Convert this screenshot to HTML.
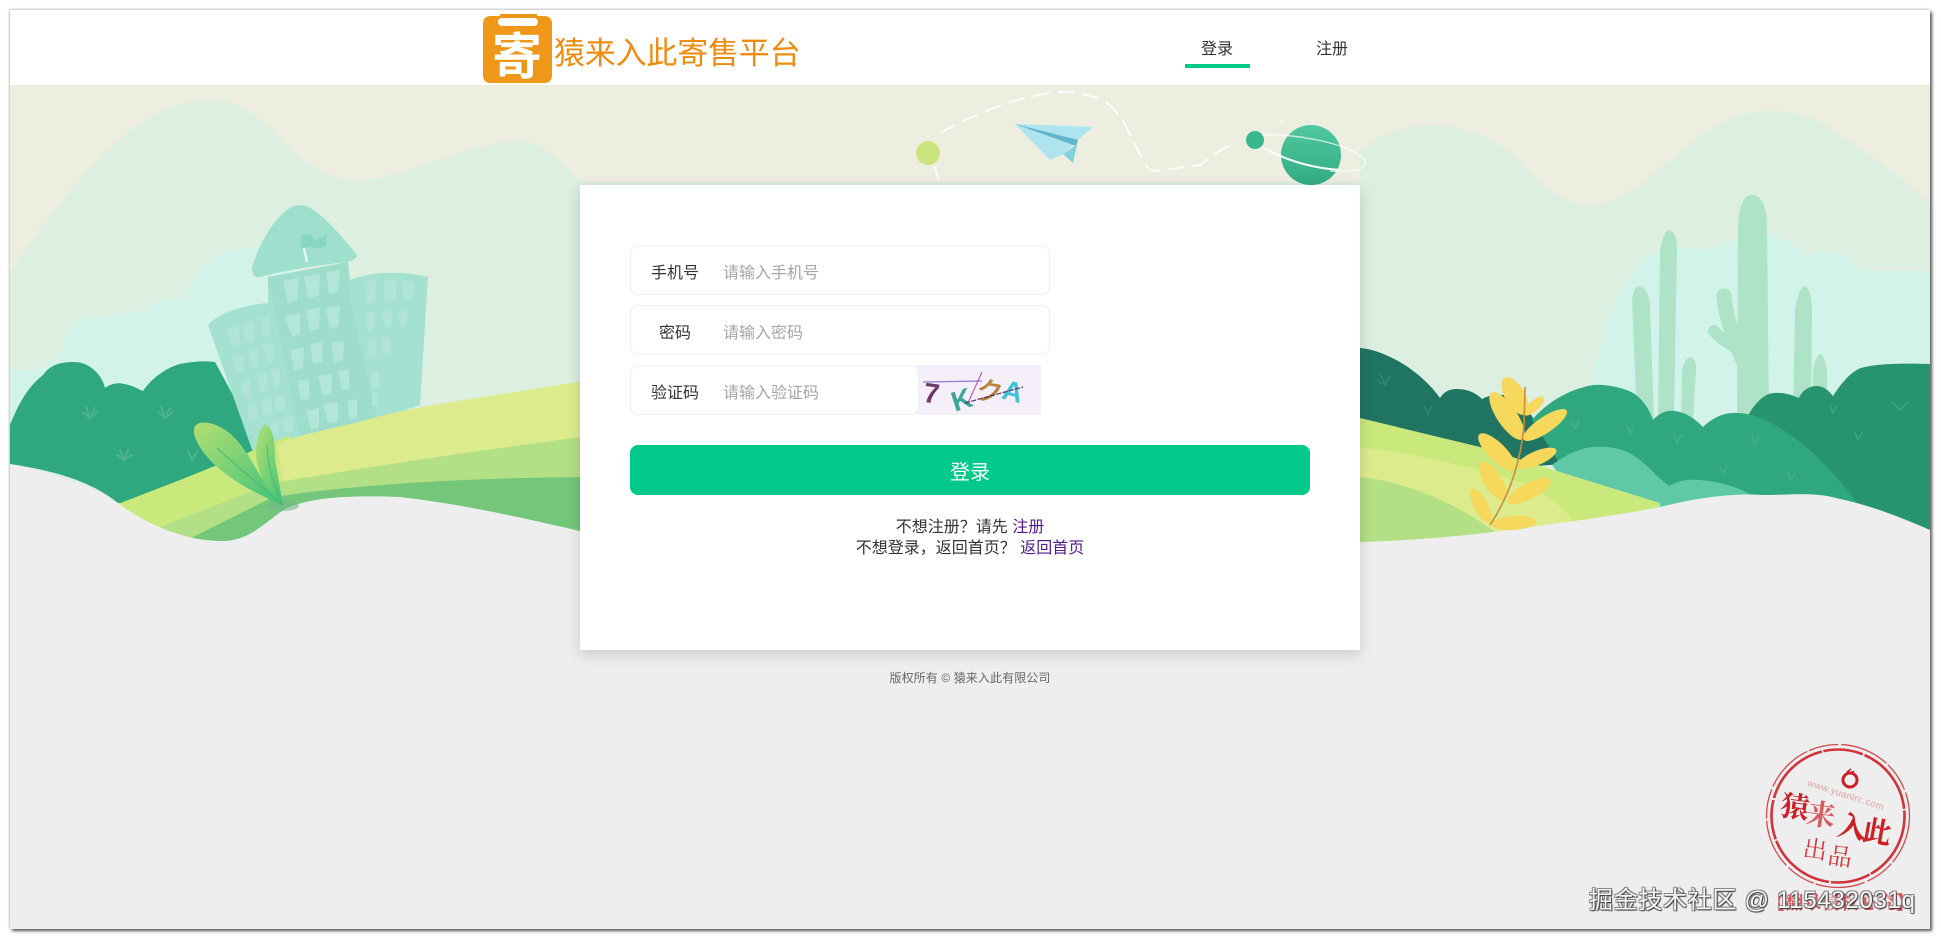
<!DOCTYPE html>
<html lang="zh"><head><meta charset="utf-8"><title>猿来入此寄售平台</title>
<style>
*{box-sizing:border-box;margin:0;padding:0}
html,body{width:1941px;height:940px;overflow:hidden;background:#fff;font-family:"Liberation Sans","Noto Sans CJK SC",sans-serif}
#frame{position:absolute;left:10px;top:10px;width:1920px;height:919px;background:#eee;box-shadow:2px 2px 3px #555,-1px -1px 2px #ccc}
svg{position:absolute;left:0;top:0}
.abs{position:absolute;white-space:nowrap}
#card{position:absolute;left:580px;top:185px;width:780px;height:465px;background:#fff;box-shadow:0 4px 14px rgba(0,0,0,.16)}
.field{position:absolute;background:#fff;border:1px solid #eef0f0;border-radius:9px;left:630px;width:420px;height:50px}
.lab{position:absolute;left:630px;width:90px;text-align:center;font-size:16px;color:#333;height:50px;line-height:50px}
.ph{position:absolute;left:723px;font-size:16px;color:#a5a5a5;height:50px;line-height:50px}
a{color:#551a8b;text-decoration:none}
</style></head><body>
<div id="frame"></div>

<svg width="1941" height="940" viewBox="0 0 1941 940">
<defs>
<clipPath id="fr"><rect x="10" y="10" width="1920" height="919"/></clipPath>
<linearGradient id="pl" x1="0" y1="0" x2="0" y2="1"><stop offset="0" stop-color="#4fc8a0"/><stop offset="1" stop-color="#33ab83"/></linearGradient>
<linearGradient id="lf" x1="0" y1="0" x2="1" y2="1"><stop offset="0" stop-color="#b2df72"/><stop offset="1" stop-color="#3fc17a"/></linearGradient>
</defs>
<g clip-path="url(#fr)">
<rect x="10" y="85" width="1920" height="500" fill="#eeeee0"/>
<!-- mountains -->
<path fill="#dcefe0" d="M10,271 C60,200 130,100 210,100 C250,100 270,130 297,154 C320,175 340,180 359,180 C400,180 470,141 520,141 C545,141 570,170 580,182 L1360,182 L1360,150 C1385,130 1410,125 1434,125 C1470,125 1500,145 1514,154 C1540,185 1560,204 1589,204 C1620,204 1640,185 1669,161 C1700,135 1730,111 1768,111 C1800,111 1820,120 1836,132 C1870,155 1900,175 1930,204 L1930,520 L10,520 Z"/>
<!-- clouds -->
<path fill="#d2f3e9" d="M10,371 L40,371 C50,360 55,357 62,357 C62,335 75,318 92,318 C115,316 130,310 142,311 C155,300 170,298 186,300 C190,270 215,248 250,248 L300,250 L300,450 L10,450Z"/>
<path fill="#d2f3e9" d="M1589,400 C1600,340 1610,310 1626,282 C1640,260 1655,250 1669,250 C1690,245 1700,250 1712,250 C1730,240 1750,236 1768,236 C1785,236 1800,250 1805,257 C1820,250 1840,250 1848,257 L1861,271 L1930,271 L1930,440 L1589,440 Z"/>
<!-- cactus -->
<g fill="#afe3c8">
<path d="M1737,420 L1738,225 Q1740,195 1752,195 Q1766,195 1767,225 L1769,420Z"/>
<path d="M1658,420 L1660,250 Q1664,230 1669,230 Q1677,232 1677,250 L1674,420Z"/>
<path d="M1637,420 L1632,300 Q1634,286 1640,286 Q1648,288 1650,305 L1654,420Z"/>
<path d="M1681,420 L1682,370 Q1686,357 1690,357 Q1697,358 1696,370 L1693,420Z"/>
<path d="M1793,420 L1795,310 Q1799,286 1805,286 Q1812,290 1812,310 L1811,420Z"/>
<path d="M1812,420 L1813,370 Q1816,354 1821,354 Q1826,358 1827,372 L1827,420Z"/>
</g>
<g fill="none" stroke="#afe3c8" stroke-linecap="round">
<path stroke-width="15" d="M1750,375 C1735,345 1726,320 1724,296"/>
<path stroke-width="12" d="M1745,352 C1730,345 1720,338 1714,331"/>
</g>
<!-- left bush -->
<path fill="#2fa87f" d="M10,425 C20,400 30,385 43,375 C50,365 60,362 74,362 C90,362 102,375 105,388 C110,384 118,382 124,384 C132,385 140,390 143,391 C150,380 165,368 180,364 C195,361 205,361 215,362 L290,500 L118,503 C90,480 50,470 10,464 Z"/>
<g fill="none" stroke="#4cb58f" stroke-width="2" stroke-linecap="round">
<path d="M86,407 L90,418 L95,408 M90,418 L83,412 M90,418 L98,412"/>
<path d="M161,407 L165,418 L170,408 M165,418 L158,412 M165,418 L173,412"/>
<path d="M120,450 L124,460 L128,450 M124,460 L117,455 M124,460 L132,455"/>
<path d="M188,450 L192,460 L197,452"/>
</g>
<!-- buildings -->
<path fill="#a5e1d0" d="M208,325 C220,312 245,305 268,303 L268,277 L348,262 L350,280 C370,272 400,270 428,277 L420,405 L377,420 L300,445 L255,458 Z"/>
<path fill="#9edccb" d="M268,277 L348,262 L350,300 L377,418 L300,438 Z"/>
<path fill="#9fdfcd" d="M300,205 C310,205 325,215 357,255 Q356,260 347,262 C320,265 285,270 260,277 Q252,278 252,268 C258,245 280,205 300,205 Z"/>
<g fill="#b1e6d8">
<path d="M283,281 L299,278 L297,300 L288,303Z"/><path d="M304,276 L320,274 L319,296 L308,298Z"/><path d="M326,272 L340,270 L338,292 L329,294Z"/>
<path d="M285,316 L300,313 L300,334 L292,337Z"/><path d="M306,310 L320,308 L319,329 L310,331Z"/><path d="M326,308 L340,306 L338,327 L330,329Z"/>
<path d="M290,350 L304,348 L303,368 L294,370Z"/><path d="M310,344 L323,342 L322,362 L313,364Z"/><path d="M331,343 L344,341 L343,360 L334,362Z"/>
<path d="M297,381 L309,379 L309,399 L301,400Z"/><path d="M318,376 L332,374 L331,394 L322,395Z"/><path d="M338,371 L349,369 L349,389 L342,390Z"/>
<path d="M306,411 L319,408 L319,428 L311,430Z"/><path d="M323,404 L338,402 L338,422 L328,423Z"/><path d="M347,401 L357,399 L357,418 L350,420Z"/>
</g>
<g fill="#afe4d6">
<path d="M226,329 L239,325 L240,345 L233,347Z"/><path d="M242,324 L254,321 L254,341 L247,342Z"/><path d="M260,318 L270,316 L270,336 L264,337Z"/>
<path d="M232,357 L243,354 L244,373 L237,374Z"/><path d="M248,350 L258,348 L258,367 L252,368Z"/><path d="M264,345 L273,343 L273,362 L267,363Z"/>
<path d="M240,382 L250,379 L251,398 L245,399Z"/><path d="M257,374 L267,372 L267,391 L261,392Z"/><path d="M271,370 L280,368 L280,387 L274,388Z"/>
<rect x="248" y="404" width="10" height="16" rx="3"/><rect x="262" y="399" width="10" height="16" rx="3"/><rect x="275" y="394" width="10" height="16" rx="3"/>
<rect x="271" y="420" width="8" height="15" rx="3"/><rect x="284" y="417" width="9" height="15" rx="3"/>
<path d="M364,282 L376,280 L375,302 L368,304Z"/><rect x="384" y="280" width="12" height="20" rx="3"/><rect x="403" y="281" width="11" height="19" rx="3"/>
<path d="M365,313 L375,312 L374,331 L368,332Z"/><path d="M382,311 L392,310 L391,327 L385,328Z"/><path d="M398,311 L408,310 L406,325 L401,326Z"/>
<rect x="367" y="339" width="9" height="19" rx="3"/><rect x="382" y="337" width="9" height="17" rx="3"/>
<rect x="371" y="370" width="8" height="18" rx="3"/><rect x="372" y="392" width="6" height="14" rx="2"/>
</g>
<path fill="#86d6c1" d="M300,236 Q312,232 314,240 Q322,238 327,235 L326,246 Q316,250 310,246 Q304,248 302,249 Z"/>
<path stroke="#e4f6f0" stroke-width="2.5" d="M304,248 L307,262"/>
<!-- right back bushes -->
<path fill="#26946f" d="M1746,420 C1750,410 1762,393 1774,393 C1786,392 1794,396 1799,398 C1802,390 1810,386 1817,386 C1824,386 1830,392 1833,396 C1840,385 1850,372 1861,368 C1875,364 1900,363 1930,364 L1930,540 L1800,540 Z"/>
<path fill="#1f7561" d="M1360,348 C1385,350 1420,370 1440,398 C1445,390 1452,389 1457,389 C1470,389 1478,395 1482,399 C1490,395 1497,394 1503,395 C1515,398 1525,405 1530,413 L1562,464 L1360,480Z"/>
<path fill="#2fa87f" d="M1532,420 C1545,405 1565,390 1593,385 C1612,384 1628,390 1633,393 C1642,398 1650,410 1653,420 C1660,412 1668,410 1675,411 C1688,413 1696,420 1703,427 C1712,418 1725,412 1737,413 C1770,413 1820,450 1862,510 L1600,540 L1560,464 Z"/>
<path fill="#5fc9a7" d="M1552,465 C1565,455 1580,448 1593,447 C1610,446 1625,448 1640,460 C1650,468 1658,478 1669,486 C1680,480 1690,479 1700,480 C1725,482 1745,490 1760,500 L1600,530 Z"/>
<g fill="none" stroke-width="1.5" stroke-linecap="round">
<g stroke="#2f8a72"><path d="M1381,375 L1385,385 L1390,376 M1385,385 L1378,381"/><path d="M1424,405 L1428,414 L1432,406"/></g>
<g stroke="#43b08c"><path d="M1572,420 L1575,428 L1579,421 M1575,428 L1570,424"/><path d="M1627,425 L1630,433 L1634,426"/><path d="M1674,435 L1677,443 L1681,435"/><path d="M1752,436 L1755,444 L1759,437"/><path d="M1720,466 L1723,473 L1727,466"/><path d="M1788,472 L1791,480 L1795,473"/></g>
<g stroke="#3aa583"><path d="M1830,405 L1833,413 L1837,406"/><path d="M1855,432 L1858,440 L1862,433"/><path d="M1892,402 L1900,410 L1908,402"/></g>
</g>
<!-- right hills -->
<path fill="#c9e97d" d="M1350,416 L1360,418 L1480,447 L1660,503 L1660,560 L1350,560Z"/>
<path fill="#dcec8d" d="M1350,446 L1360,448 C1390,450 1427,457 1493,473 C1520,482 1547,490 1570,517 L1570,560 L1350,560Z"/>
<path fill="#b3e086" d="M1350,475 L1360,477 C1390,480 1427,490 1473,517 L1500,535 L1350,560Z"/>
<!-- left hills -->
<path fill="#c9e97d" d="M110,507 L180,480 L247,453 L290,435 L290,550 L110,550 Z"/>
<path fill="#dcec8d" d="M277,445 L283,441 C320,430 350,425 377,417 C420,405 500,395 590,380 L590,445 C480,450 380,465 283,483 Z"/>
<path fill="#b3e086" d="M160,527 L273,483 C380,465 480,450 590,436 L590,545 L180,545Z"/>
<path fill="#74c67b" d="M185,541 L273,497 C340,487 440,478 590,477 L590,545 L190,545Z"/>
<!-- floor -->
<path fill="#eeeeee" d="M10,464 C60,475 90,485 118,503 C140,520 180,541 222,541 C250,541 265,522 285,509 C310,497 350,495 400,497 C470,505 530,520 580,531 L1360,542 C1420,540 1460,536 1493,532 C1570,522 1620,515 1660,507 C1700,497 1735,493 1762,495 C1790,495 1815,492 1836,498 C1870,505 1900,517 1930,530 L1930,929 L10,929Z"/>
<!-- left leaf -->
<ellipse cx="283" cy="506" rx="16" ry="5" fill="#6fb585" opacity=".55"/>
<path fill="url(#lf)" d="M283,505 C245,490 205,465 195,437 C190,422 202,420 216,425 C240,435 250,460 262,478 Z"/>
<path fill="url(#lf)" d="M283,505 C265,490 256,470 256,450 C257,435 262,425 266,425 C274,428 275,445 275,460 Z"/>
<path fill="none" stroke="#48b872" stroke-width="1" d="M283,505 C260,485 235,465 217,448 M283,505 C275,490 268,470 267,445"/>
<!-- yellow plant -->
<g fill="#f5d85c">
<ellipse cx="1515" cy="396" rx="21" ry="10" transform="rotate(60 1515 396)"/>
<ellipse cx="1534" cy="406" rx="13" ry="5" transform="rotate(-43 1534 406)"/>
<ellipse cx="1507" cy="416" rx="28" ry="10" transform="rotate(56 1507 416)"/>
<ellipse cx="1545" cy="425" rx="26" ry="8" transform="rotate(-34 1545 425)"/>
<ellipse cx="1497" cy="452" rx="25" ry="9" transform="rotate(45 1497 452)"/>
<ellipse cx="1537" cy="458" rx="21" ry="7" transform="rotate(-23 1537 458)"/>
<ellipse cx="1493" cy="481" rx="22" ry="9" transform="rotate(58 1493 481)"/>
<ellipse cx="1529" cy="491" rx="24" ry="8" transform="rotate(-27 1529 491)"/>
<ellipse cx="1481" cy="506" rx="19" ry="7" transform="rotate(62 1481 506)"/>
<ellipse cx="1514" cy="523" rx="22" ry="7" transform="rotate(-4 1514 523)"/>
</g>
<path fill="none" stroke="#c78d3f" stroke-width="1.6" d="M1525,387 L1524,425 C1521,460 1510,495 1490,525"/>
<!-- trail -->
<path fill="none" stroke="#fff" stroke-opacity=".8" stroke-width="2" stroke-dasharray="17 8" d="M940,133 C960,122 1000,103 1030,97 C1045,93 1060,91 1070,92 C1090,95 1100,98 1107,103 C1118,112 1125,122 1130,135 L1143,160 C1148,170 1152,171 1157,171 L1200,165 C1210,158 1218,150 1232,145"/>
<path fill="none" stroke="#fff" stroke-opacity=".8" stroke-width="2" d="M935,166 Q936,174 939,180"/>
<circle cx="928" cy="153" r="12" fill="#cbe57e"/>
<!-- plane -->
<path fill="#ade4f0" d="M1015,124 L1093,127 L1078,140 L1063,154 L1050,160 Z"/>
<path fill="#62b6cc" d="M1015,124 L1078,140 L1076,146 Z"/>
<path fill="#83d0e0" d="M1063,154 L1076,145 L1078,140 L1073,163 Z"/>
<!-- planet -->
<circle cx="1311" cy="155" r="30" fill="url(#pl)"/>
<circle cx="1255" cy="140" r="9" fill="#3ab78e"/>
<path fill="none" stroke="#fff" stroke-opacity=".7" stroke-width="1.4" d="M1262,135 C1290,133 1345,142 1363,158 C1374,171 1345,172 1330,171"/>
<path fill="none" stroke="#fff" stroke-width="2" d="M1262,147 C1285,160 1310,168 1340,170"/>
<path stroke="#fff" stroke-opacity=".7" stroke-width="2" d="M1281,121 L1283,123"/>
</g>
</svg>

<div id="card"></div>

<!-- header -->
<div class="abs" style="left:10px;top:10px;width:1920px;height:75px;background:#fff"></div>
<svg width="1941" height="100" viewBox="0 0 1941 100">
<path fill="#ee9719" d="M491,16 L500,16 L500,14 L537,14 L537,16 L544,16 Q552,16 552,24 L552,75 Q552,83 544,83 L491,83 Q483,83 483,75 L483,24 Q483,16 491,16Z"/>
<rect x="498" y="18" width="40" height="8" rx="4" fill="#fff"/>
<text x="517" y="74" text-anchor="middle" font-size="50" font-weight="700" fill="#fff" font-family="'Liberation Sans','Noto Sans CJK SC',sans-serif">寄</text>
</svg>
<div class="abs" style="left:554px;top:32px;font-size:31px;letter-spacing:-.2px;line-height:44px;color:#ee8c10">猿来入此寄售平台</div>
<div class="abs" style="left:1184px;top:39px;width:66px;text-align:center;font-size:16px;line-height:22px;color:#333">登录</div>
<div class="abs" style="left:1185px;top:64px;width:65px;height:4px;background:#00c98a"></div>
<div class="abs" style="left:1299px;top:39px;width:66px;text-align:center;font-size:16px;line-height:22px;color:#333">注册</div>

<!-- form -->
<div class="field" style="top:245px"></div>
<div class="lab" style="top:249px">手机号</div><div class="ph" style="top:249px">请输入手机号</div>
<div class="field" style="top:305px"></div>
<div class="lab" style="top:309px">密码</div><div class="ph" style="top:309px">请输入密码</div>
<div class="abs" style="left:915px;top:365px;width:126px;height:50px;background:#f5eff9"></div>
<div class="field" style="top:365px;width:289px"></div>
<div class="lab" style="top:369px">验证码</div><div class="ph" style="top:369px">请输入验证码</div>
<svg width="1941" height="500" viewBox="0 0 1941 500" font-family="'Liberation Sans',sans-serif" font-weight="700" font-size="28">
<text x="924" y="403" fill="#6b3a6b" transform="rotate(8 932 392)">7</text>
<text x="951" y="409" fill="#3aa79a" transform="rotate(-18 962 398)">K</text>
<text x="977" y="400" fill="#b9833a" font-size="26" transform="rotate(10 987 390)">ク</text>
<text x="1003" y="401" fill="#3fc3d8" font-size="28" transform="rotate(14 1013 390)">A</text>
<path d="M923,382 L982,381" stroke="#8a7ed0" stroke-width="1.2"/>
<path d="M968,403 L982,372" stroke="#c040b0" stroke-width="1"/>
<path d="M965,403 L1023,387" stroke="#503060" stroke-width="1.2" stroke-dasharray="5 1.5"/>
</svg>
<div class="abs" style="left:630px;top:445px;width:680px;height:50px;background:#00c98a;border-radius:8px"></div>
<div class="abs" style="left:630px;top:448px;width:680px;color:#fff;font-size:20px;line-height:50px;text-align:center">登录</div>
<div class="abs" style="left:580px;top:517px;width:780px;text-align:center;font-size:16px;line-height:21px;color:#333">不想注册？请先 <a>注册</a><br>不想登录，返回首页？ <a>返回首页</a></div>
<div class="abs" style="left:580px;top:669px;width:780px;text-align:center;font-size:12px;letter-spacing:.1px;line-height:18px;color:#666">版权所有 © 猿来入此有限公司</div>

<!-- stamp -->
<svg width="1941" height="940" viewBox="0 0 1941 940" font-family="'Liberation Serif','Noto Serif CJK SC',serif">
<g fill="none" stroke="#cc1f26">
<circle cx="1838" cy="816" r="71.5" stroke-width="1.3" stroke-dasharray="50 2 30 3" opacity=".8"/>
<circle cx="1838" cy="816" r="66.5" stroke-width="2.6" stroke-dasharray="70 1.5 40 2" opacity=".9"/>
</g>
<g fill="#cc1f26" font-weight="700">
<text x="1795" y="817" font-size="29" text-anchor="middle" transform="rotate(8 1795 807)">猿</text>
<text x="1821" y="825" font-size="29" text-anchor="middle" opacity=".7" transform="rotate(8 1821 815)">来</text>
<text x="1852" y="837" font-size="29" text-anchor="middle" transform="rotate(10 1852 827)">入</text>
<text x="1877" y="842" font-size="29" text-anchor="middle" transform="rotate(10 1877 832)">此</text>
</g>
<g fill="#cc1f26" opacity=".9">
<text x="1815" y="858" font-size="24" text-anchor="middle" transform="rotate(8 1815 850)">出</text>
<text x="1840" y="865" font-size="24" text-anchor="middle" transform="rotate(8 1840 857)">品</text>
</g>
<text x="1846" y="798" font-size="9.5" fill="#e0a0a4" text-anchor="middle" font-family="'Liberation Sans',sans-serif" letter-spacing=".4" transform="rotate(18 1846 795)">www.yuanlrc.com</text>
<circle cx="1850" cy="780" r="7" fill="none" stroke="#cc1f26" stroke-width="3"/>
<path d="M1847,772 L1851,769 M1850,774 L1854,771" stroke="#cc1f26" stroke-width="1.5" fill="none"/>
</svg>
<div class="abs" style="left:1767px;top:890px;font-size:18px;line-height:26px;color:#d8323a;letter-spacing:.4px;opacity:.85;font-family:'Liberation Serif','Noto Serif CJK SC',serif;font-weight:700">【翻录侵权必究】</div>
<div class="abs" style="left:1589px;top:886px;font-size:24px;line-height:30px;color:#f6f6f6;letter-spacing:.7px;text-shadow:1px 1px 1px #333,-1px -1px 0 #888,1px -1px 0 #888,-1px 1px 0 #888">掘金技术社区 @ 115432031q</div>
</body></html>
